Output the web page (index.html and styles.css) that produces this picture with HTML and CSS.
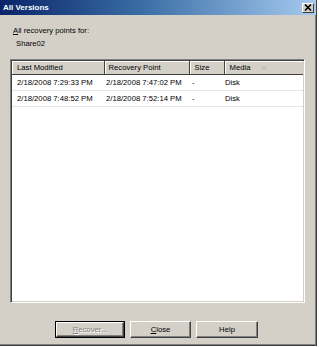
FILE: index.html
```html
<!DOCTYPE html>
<html lang="en">
<head>
<meta charset="UTF-8" />
<title>All Versions</title>
<link rel="stylesheet" href="styles.css">
</head>
<body>
<div class="window">
	<div class="titlebar">
		<span class="title">All Versions</span>
		<span class="closebox">
			<svg width="8" height="7" viewBox="0 0 8 7"><path d="M1 0.5 L7 6.5 M7 0.5 L1 6.5" stroke="#000" stroke-width="1.6"/></svg>
		</span>
	</div>

	<div class="body">
		<p class="caption"><u>A</u>ll recovery points for:</p>
		<p class="caption share">Share02</p>

		<div class="list">
			<table>
				<thead>
					<tr>
						<th class="col1">Last Modified</th>
						<th class="col2">Recovery Point</th>
						<th class="col3">Size</th>
						<th class="col4">Media <span class="sortmark"></span></th>
					</tr>
				</thead>
				<tbody>
					<tr>
						<td>2/18/2008 7:29:33 PM</td>
						<td>2/18/2008 7:47:02 PM</td>
						<td>-</td>
						<td>Disk</td>
					</tr>
					<tr>
						<td>2/18/2008 7:48:52 PM</td>
						<td>2/18/2008 7:52:14 PM</td>
						<td>-</td>
						<td>Disk</td>
					</tr>
				</tbody>
			</table>
		</div>

		<div class="buttons">
			<span class="btn default"><span class="btninner disabled"><u>R</u>ecover...</span></span>
			<span class="btn close"><span class="btninner"><u>C</u>lose</span></span>
			<span class="btn help"><span class="btninner">Help</span></span>
		</div>
	</div>
</div>
</body>
</html>
```

FILE: styles.css
```css
* {
	margin: 0;
	padding: 0;
	box-sizing: border-box;
}

body {
	background: #fff;
	font: 7.7px "Liberation Sans", Arial, sans-serif;
	color: #000;
}

.window {
	width: 317px;
	height: 346px;
	background: #d4d0c8;
	border-right: 1px solid #404040;
	border-bottom: 1px solid #404040;
	box-shadow: inset -1px -1px #808080;
	display: flex;
	flex-direction: column;
}

.titlebar {
	height: 15px;
	flex: none;
	background: linear-gradient(to right, #0a246a 0%, #3a6ea5 45%, #a6caf0 100%);
	display: flex;
	align-items: center;
	justify-content: space-between;
	padding: 0 2px 0 3px;
}

.title {
	color: #fff;
	font-weight: bold;
	font-size: 8px;
}

.closebox {
	width: 12px;
	height: 10px;
	background: #d4d0c8;
	border: 1px solid;
	border-color: #fff #404040 #404040 #fff;
	display: flex;
	align-items: center;
	justify-content: center;
}

.body {
	flex: 1;
	padding: 10px 12px 0 10px;
	display: flex;
	flex-direction: column;
}

.caption {
	line-height: 11px;
	padding-left: 3px;
}

.caption.share {
	margin-top: 2px;
	padding-left: 6px;
}

.list {
	margin-top: 10px;
	width: 295px;
	height: 244px;
	background: #fff;
	border: 1px solid;
	border-color: #808080 #fff #fff #808080;
	box-shadow: inset 1px 1px #404040, inset -1px -1px #d4d0c8;
	padding: 1px;
}

table {
	width: 100%;
	border-collapse: collapse;
	table-layout: fixed;
}

th {
	height: 13px;
	background: #d4d0c8;
	font-weight: normal;
	text-align: left;
	padding: 0 0 0 5px;
	border-right: 1px solid #404040;
	border-bottom: 1px solid #404040;
	box-shadow: inset 1px 1px #fff;
	white-space: nowrap;
}

th.col1 { width: 92px; }
th.col2 { width: 85px; padding-left: 4px; }
th.col3 { width: 35px; }
th.col4 { border-right: none; }

.sortmark {
	display: inline-block;
	margin-left: 8px;
	width: 0;
	height: 0;
	border-left: 3px solid transparent;
	border-right: 3px solid transparent;
	border-bottom: 4px solid #c4c0b8;
	vertical-align: 1px;
}

td {
	height: 16px;
	padding: 0 0 0 5px;
	border-bottom: 1px solid #e6e6e6;
	white-space: nowrap;
	overflow: hidden;
}

td:nth-child(2) { padding-left: 2px; }
td:nth-child(3) { padding-left: 3px; }
td:nth-child(4) { padding-left: 1px; }

.buttons {
	margin-top: 18px;
	display: flex;
	justify-content: center;
	gap: 5px;
	padding-right: 1px;
}

.btn {
	display: flex;
	height: 17px;
}

.btn.default {
	width: 70px;
	border: 1px solid #000;
}

.btn.close { width: 61px; }
.btn.help { width: 62px; }

.btninner {
	flex: 1;
	display: flex;
	align-items: center;
	justify-content: center;
	border: 1px solid;
	border-color: #fff #404040 #404040 #fff;
	box-shadow: inset -1px -1px #808080;
}

.btninner.disabled {
	color: #808080;
	text-shadow: 1px 1px #fff;
}
```
